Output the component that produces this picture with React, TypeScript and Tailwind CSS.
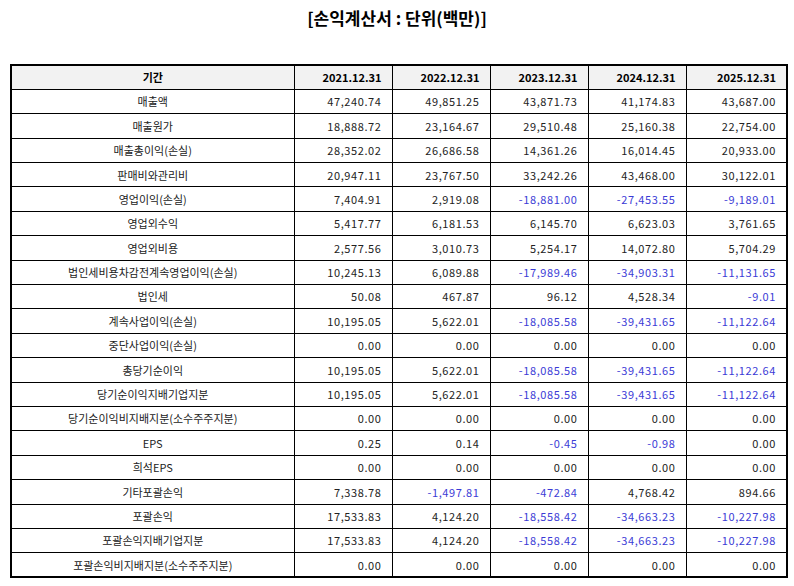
const years = ["2021.12.31", "2022.12.31", "2023.12.31", "2024.12.31", "2025.12.31"];

const rows: [string, string[]][] = [
  ["매출액", ["47,240.74", "49,851.25", "43,871.73", "41,174.83", "43,687.00"]],
  ["매출원가", ["18,888.72", "23,164.67", "29,510.48", "25,160.38", "22,754.00"]],
  ["매출총이익(손실)", ["28,352.02", "26,686.58", "14,361.26", "16,014.45", "20,933.00"]],
  ["판매비와관리비", ["20,947.11", "23,767.50", "33,242.26", "43,468.00", "30,122.01"]],
  ["영업이익(손실)", ["7,404.91", "2,919.08", "-18,881.00", "-27,453.55", "-9,189.01"]],
  ["영업외수익", ["5,417.77", "6,181.53", "6,145.70", "6,623.03", "3,761.65"]],
  ["영업외비용", ["2,577.56", "3,010.73", "5,254.17", "14,072.80", "5,704.29"]],
  ["법인세비용차감전계속영업이익(손실)", ["10,245.13", "6,089.88", "-17,989.46", "-34,903.31", "-11,131.65"]],
  ["법인세", ["50.08", "467.87", "96.12", "4,528.34", "-9.01"]],
  ["계속사업이익(손실)", ["10,195.05", "5,622.01", "-18,085.58", "-39,431.65", "-11,122.64"]],
  ["중단사업이익(손실)", ["0.00", "0.00", "0.00", "0.00", "0.00"]],
  ["총당기순이익", ["10,195.05", "5,622.01", "-18,085.58", "-39,431.65", "-11,122.64"]],
  ["당기순이익지배기업지분", ["10,195.05", "5,622.01", "-18,085.58", "-39,431.65", "-11,122.64"]],
  ["당기순이익비지배지분(소수주주지분)", ["0.00", "0.00", "0.00", "0.00", "0.00"]],
  ["EPS", ["0.25", "0.14", "-0.45", "-0.98", "0.00"]],
  ["희석EPS", ["0.00", "0.00", "0.00", "0.00", "0.00"]],
  ["기타포괄손익", ["7,338.78", "-1,497.81", "-472.84", "4,768.42", "894.66"]],
  ["포괄손익", ["17,533.83", "4,124.20", "-18,558.42", "-34,663.23", "-10,227.98"]],
  ["포괄손익지배기업지분", ["17,533.83", "4,124.20", "-18,558.42", "-34,663.23", "-10,227.98"]],
  ["포괄손익비지배지분(소수주주지분)", ["0.00", "0.00", "0.00", "0.00", "0.00"]],
];

export default function App() {
  return (
    <div
      className="w-[794px] h-[586px] bg-white text-black"
      style={{ fontFamily: '"Noto Sans CJK KR", "Noto Sans", sans-serif' }}
    >
      <h1 className="pt-[5px] text-center text-[17px] font-bold leading-[26px]">
        [손익계산서 : 단위(백만)]
      </h1>
      <div className="pl-[10px] pt-[33px]">
        <table className="w-[776px] border-collapse border-2 border-black text-[11px] table-fixed">
          <colgroup>
            <col className="w-[283px]" />
            <col className="w-[98px]" />
            <col className="w-[98px]" />
            <col className="w-[98px]" />
            <col className="w-[98px]" />
            <col className="w-[101px]" />
          </colgroup>
          <thead>
            <tr className="h-[24.4px] bg-[#f2f2f2] font-bold">
              <th className="border border-black text-center p-0">기간</th>
              {years.map((y) => (
                <th key={y} className="border border-black text-right pr-[10px] p-0">
                  {y}
                </th>
              ))}
            </tr>
          </thead>
          <tbody>
            {rows.map(([label, vals]) => (
              <tr key={label} className="h-[24.4px]">
                <td className="border border-black text-center p-0 text-[#222]">{label}</td>
                {vals.map((v, i) => (
                  <td
                    key={i}
                    className={
                      v.startsWith("-")
                        ? "border border-black text-right pr-[10px] p-0 tracking-[0.6px] text-[#3b3bd6]"
                        : "border border-black text-right pr-[10px] p-0 tracking-[0.6px] text-[#222]"
                    }
                  >
                    {v}
                  </td>
                ))}
              </tr>
            ))}
          </tbody>
        </table>
      </div>
    </div>
  );
}
